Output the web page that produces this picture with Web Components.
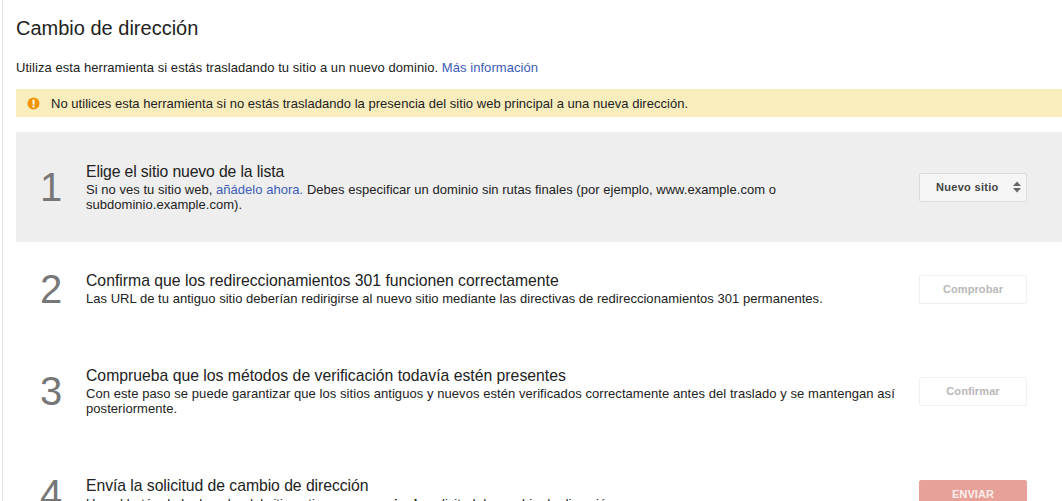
<!DOCTYPE html>
<html lang="es">
<head>
<meta charset="utf-8">
<title>Cambio de dirección</title>
<style>
  html, body { margin: 0; height: 501px; overflow: hidden; background: #fff; }
  body { font-family: "Liberation Sans", Arial, sans-serif; color: #222; }
  a { color: #3b5cb8; text-decoration: none; }
</style>
</head>
<body>
<template id="move-step-tpl">
  <style>
    :host { display: flex; align-items: center; flex: none; box-sizing: border-box; padding-left: 24px; padding-right: 35px; height: 110px; }
    :host([active]) { background: #eee; }
    :host([num="2"]) { height: 94px; }
    :host([num="4"]) { height: 96px; }
    .num { flex: 0 0 46px; font-size: 40px; line-height: 46px; color: #777; }
    .body { flex: 1; min-width: 0; padding-right: 24px; }
    .head { font-size: 15.75px; line-height: 20px; color: #222; }
    .desc { font-size: 13px; line-height: 15.5px; letter-spacing: 0.03px; color: #222; }
    :host([num="1"]) .head { letter-spacing: -0.13px; }
    :host([num="3"]) .desc { letter-spacing: 0.06px; }
    :host([num="4"]) .head { letter-spacing: -0.05px; }
    .act { flex: 0 0 108px; display: flex; }
  </style>
  <div class="num"></div>
  <div class="body">
    <div class="head"><slot name="head"></slot></div>
    <div class="desc"><slot></slot></div>
  </div>
  <div class="act"><slot name="action"></slot></div>
</template>

<template id="move-button-tpl">
  <style>
    :host { display: flex; align-items: center; justify-content: center; position: relative; box-sizing: border-box; width: 108px; height: 29px; border-radius: 2px; font-size: 11px; letter-spacing: 0.1px; font-weight: bold; border: 1px solid #f0f0f0; color: #b8b8b8; background: #fff; }
    :host([kind="select"]) { border-color: #dcdcdc; background: #f5f5f5; color: #444; justify-content: flex-start; padding-left: 16px; letter-spacing: 0.3px; }
    :host([kind="red"]) { background: #e8a198; border-color: #e8a198; color: #fbeeec; }
    svg { position: absolute; right: 4px; top: 6px; display: none; }
    :host([kind="select"]) svg { display: block; }
  </style>
  <slot></slot>
  <svg width="10" height="14" viewBox="0 0 10 14"><path d="M5 1.5 9 6H1zM1 8h8l-4 4.5z" fill="#666"/></svg>
</template>

<template id="move-page-tpl">
  <style>
    :host { display: block; box-sizing: border-box; height: 501px; margin-left: 2px; border-left: 1px solid #e5e5e5; padding-left: 13px; overflow: hidden; }
    h1 { margin: 0; padding-top: 17px; font-size: 20px; line-height: 22px; font-weight: normal; color: #222; }
    .intro { margin-top: 21px; font-size: 13px; line-height: 16px; letter-spacing: 0.06px; color: #222; }
  </style>
  <h1><slot name="title"></slot></h1>
  <div class="intro"><slot name="intro"></slot></div>
  <slot></slot>
</template>

<template id="move-warning-tpl">
  <style>
    :host { display: flex; align-items: center; margin-top: 13px; height: 28px; background: #f9edbe; font-size: 13px; letter-spacing: 0.03px; color: #222; padding-left: 11px; margin-bottom: 15px; }
    svg { flex: none; margin-right: 11px; }
  </style>
  <svg width="13" height="13" viewBox="0 0 13 13"><circle cx="6.5" cy="6.5" r="6" fill="#f09300"/><rect x="5.5" y="2.6" width="2" height="5" fill="#fff"/><rect x="5.5" y="8.5" width="2" height="2" fill="#fff"/></svg>
  <slot></slot>
</template>

<move-page>
  <span slot="title">Cambio de dirección</span>
  <span slot="intro">Utiliza esta herramienta si estás trasladando tu sitio a un nuevo dominio. <a href="#">Más información</a></span>
  <move-warning>No utilices esta herramienta si no estás trasladando la presencia del sitio web principal a una nueva dirección.</move-warning>
  <move-step num="1" active>
    <span slot="head">Elige el sitio nuevo de la lista</span>
    Si no ves tu sitio web, <a href="#">añádelo ahora.</a> Debes especificar un dominio sin rutas finales (por ejemplo, www.example.com o subdominio.example.com).
    <move-button slot="action" kind="select">Nuevo sitio</move-button>
  </move-step>
  <move-step num="2">
    <span slot="head">Confirma que los redireccionamientos 301 funcionen correctamente</span>
    Las URL de tu antiguo sitio deberían redirigirse al nuevo sitio mediante las directivas de redireccionamientos 301 permanentes.
    <move-button slot="action">Comprobar</move-button>
  </move-step>
  <move-step num="3">
    <span slot="head">Comprueba que los métodos de verificación todavía estén presentes</span>
    Con este paso se puede garantizar que los sitios antiguos y nuevos estén verificados correctamente antes del traslado y se mantengan así posteriormente.
    <move-button slot="action">Confirmar</move-button>
  </move-step>
  <move-step num="4">
    <span slot="head">Envía la solicitud de cambio de dirección</span>
    Usa el botón de la derecha del sitio antiguo <b>para enviar la</b> solicitud de cambio de dirección.
    <move-button slot="action" kind="red">ENVIAR</move-button>
  </move-step>
</move-page>

<script>
"use strict";

function stamp(el, id) {
  var root = el.attachShadow({mode: "open"});
  root.appendChild(document.getElementById(id).content.cloneNode(true));
  return root;
}

class MovePage extends HTMLElement {
  constructor() { super(); stamp(this, "move-page-tpl"); }
}

class MoveWarning extends HTMLElement {
  constructor() { super(); stamp(this, "move-warning-tpl"); }
}

class MoveButton extends HTMLElement {
  constructor() { super(); stamp(this, "move-button-tpl"); }
}

class MoveStep extends HTMLElement {
  constructor() {
    super();
    this.root = stamp(this, "move-step-tpl");
  }
  connectedCallback() {
    this.root.querySelector(".num").textContent = this.getAttribute("num");
  }
}

customElements.define("move-page", MovePage);
customElements.define("move-warning", MoveWarning);
customElements.define("move-button", MoveButton);
customElements.define("move-step", MoveStep);
</script>
</body>
</html>
